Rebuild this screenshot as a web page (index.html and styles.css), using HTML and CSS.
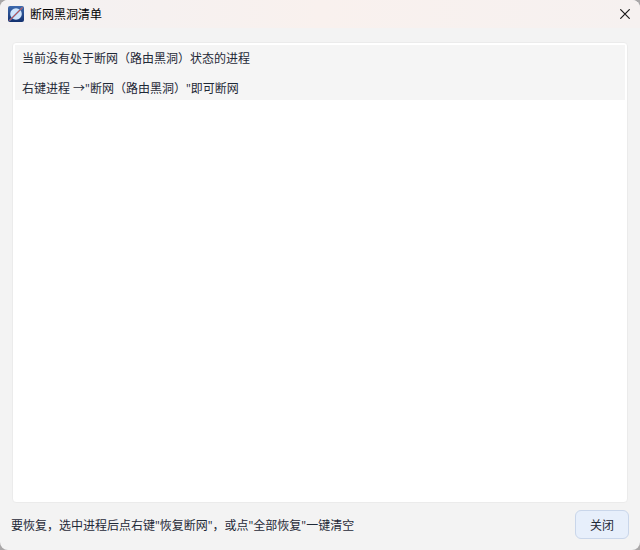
FILE: index.html
```
<!DOCTYPE html>
<html lang="zh-CN">
<head>
    <meta charset="UTF-8">
    <meta name="viewport" content="width=device-width, initial-scale=1.0">
    <title>断网黑洞清单</title>
    <link rel="stylesheet" href="styles.css">
</head>
<body>
    <div class="window">
        <header class="titlebar">
            <svg class="app-icon" viewBox="0 0 16 16" aria-hidden="true">
                <defs>
                    <linearGradient id="iconBg" x1="0" y1="0" x2="0" y2="1">
                        <stop offset="0" stop-color="#3d68ad"/>
                        <stop offset="1" stop-color="#12306f"/>
                    </linearGradient>
                </defs>
                <rect width="16" height="16" rx="2" fill="url(#iconBg)"/>
                <circle cx="8" cy="8" r="5.8" fill="#cfe4fb"/>
                <path d="M1.5 14.5L14.5 1.5" stroke="#7f7fa8" stroke-width="1.6"/>
                <path d="M1.5 14.5L14.5 1.5" stroke="#c4504f" stroke-width="1"/>
            </svg>
            <h1>断网黑洞清单</h1>
            <button type="button" class="close-x" aria-label="关闭窗口">
                <svg viewBox="0 0 10 10" aria-hidden="true">
                    <path d="M0.3 0.3L9.7 9.7M9.7 0.3L0.3 9.7" stroke="#1a1a1a" stroke-width="1.2"/>
                </svg>
            </button>
        </header>

        <!-- 断网进程列表 -->
        <main class="list">
            <ul>
                <li>当前没有处于断网（路由黑洞）状态的进程</li>
                <li>右键进程 →"断网（路由黑洞）"即可断网</li>
            </ul>
        </main>

        <footer class="footer">
            <p>要恢复，选中进程后点右键"恢复断网"，或点"全部恢复"一键清空</p>
            <button type="button" class="btn">关闭</button>
        </footer>
    </div>
</body>
</html>
```
FILE: styles.css
```
* {
    box-sizing: border-box;
}
body {
    margin: 0;
    background-color: #a9a7a8;
    color: #1f2937;
    font-family: "Segoe UI", "Open Sans", "Noto Sans CJK SC", sans-serif;
    font-size: 12px;
}
.window {
    display: flex;
    flex-direction: column;
    height: 100vh;
    background-color: #f3f3f3;
    border-radius: 8px;
    overflow: hidden;
}
.titlebar {
    display: flex;
    align-items: center;
    height: 28px;
    padding: 0 10px 0 8px;
    background: linear-gradient(to right, #f3f1f2, #f9f1ee 50%, #f6f1f0);
}
.app-icon {
    width: 16px;
    height: 16px;
}
h1 {
    flex: 1;
    margin: 0 0 0 6px;
    color: #000;
    font-size: 12px;
    font-weight: normal;
}
.close-x {
    display: flex;
    padding: 0;
    border: none;
    background: none;
}
.close-x svg {
    width: 10px;
    height: 10px;
}
.list {
    flex: 1;
    margin: 14px 12px 0;
    padding: 2px;
    background-color: white;
    border: 1px solid #ebebeb;
    border-radius: 4px;
}
.list ul {
    margin: 0;
    padding: 0;
    list-style: none;
}
.list li {
    height: 30px;
    padding: 0 7px;
    background-color: #f5f5f5;
    line-height: 28px;
}
.list li:last-child {
    height: 25px;
}
.footer {
    display: flex;
    align-items: center;
    justify-content: space-between;
    padding: 7px 11px 11px;
}
.footer p {
    margin: 0;
}
.btn {
    width: 54px;
    height: 29px;
    padding: 0;
    border: 1px solid #c9d6ea;
    border-radius: 6px;
    background-color: #e7effb;
    color: #1f2937;
    font-family: inherit;
    font-size: 12px;
}
```
